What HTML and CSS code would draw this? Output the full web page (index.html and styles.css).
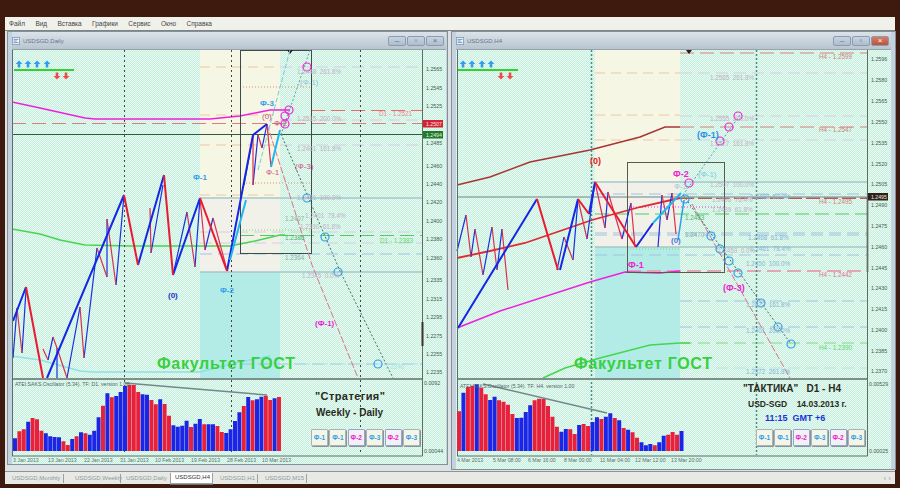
FILE: index.html
```html
<!DOCTYPE html>
<html lang="ru">
<head>
<meta charset="utf-8">
<title>USDSGD</title>
<link rel="stylesheet" href="styles.css">
</head>
<body>
<div class="app">
  <nav class="menu">
    <span>Файл</span><span>Вид</span><span>Вставка</span><span>Графики</span><span>Сервис</span><span>Окно</span><span>Справка</span>
  </nav>
  <main class="mdi">
    <section class="win win-left">
      <header class="titlebar">
        <svg class="ticon" viewBox="0 0 10 10"><rect x="0.5" y="0.5" width="9" height="9" fill="#eef3f8" stroke="#7f9ab8"/><path d="M2 3H8M2 5H6M2 7H8" stroke="#5c82aa"/></svg>
        <span class="ttext">USDSGD,Daily</span>
        <span class="ctls"><span class="ctl">–</span><span class="ctl">▫</span><span class="ctl">×</span></span>
      </header>
      <div class="panel">
        <svg class="chart" width="434" height="415" viewBox="12 50 434 415">
          <defs>
            <path id="up" d="M0-3.400 3.400 0H1.300V3.400H-1.300V0H-3.400Z" fill="#2f9df0"/>
            <path id="dn" d="M0 3.400 3.400 0H1.300V-3.400H-1.300V0H-3.400Z" fill="#ee4a4a"/>
          </defs>
          <!-- zones -->
          <rect x="200" y="50" width="80" height="148" class="z-cream"/>
          <rect x="200" y="198" width="80" height="74" class="z-gray"/>
          <rect x="200" y="272" width="80" height="106" class="z-cyan"/>
          <!-- fibonacci levels -->
          <path class="l-orange" d="M200 67H280M200 115H280M200 145H280M200 195H280"/>
          <path class="l-lav" d="M280 67H422M280 120H422M280 145H422M200 232H422M200 243H422"/>
          <path class="l-gray" d="M200 198H422M200 272H422"/>
          <path class="l-blue" d="M200 254H422M240 364H422"/>
          <path class="l-paleblue" d="M280 364H422"/>
          <path class="l-redfaint" d="M12 123.500H422"/>
          <path class="l-red" d="M311 110.500H422"/>
          <path class="l-green" d="M240 235.500H422"/>
          <path class="l-dots-red" d="M240 87H311M240 183H311"/>
          <path class="l-dots-green" d="M240 230H311"/>
          <path class="l-bid" d="M12 134.500H422"/>
          <!-- moving averages -->
          <path class="ma-magenta" d="M12 102 40 108 85 118 95 119H210L240 116 270 110H290"/>
          <path class="ma-green" d="M12 229 40 234 60 240 85 245 130 246H230L255 241 280 235H285"/>
          <path class="ma-cyan" d="M12 356 40 360 80 371 92 372H200L235 363 270 356"/>
          <!-- grid -->
          <path class="grid" d="M124.500 50V455M231.500 50V455M360.500 50V455"/>
          <rect x="240.500" y="50.500" width="71" height="203" class="box"/>
          <path class="tri" d="M287 50H293L290 54Z"/>
          <!-- wave lines -->
          <path class="w-pink" d="M267 124 312 265 358 378"/>
          <path class="w-dot" d="M281 134 340 271 393 378"/>
          <path class="w-cy" d="M258 170 290 50"/>
          <path class="w-dotb" d="M281 135 310 50"/>
          <!-- thin zigzag -->
          <path class="t-blue" d="M13 358 17 308M22 353 26 290M48 360 53 337M57 348V378M67 378 80 307M84 358 97 248M107 277V219M116 285 124 195M151 253 163 185M173 275 187 212M195 267 200 198M205 250 213 218M244 185 253 135M258 135 253 185M262 148 267 124"/>
          <path class="t-red" d="M17 308 22 353M43 349 48 360M57 348 67 378M53 337 57 348M80 307 84 358M97 248 107 277M107 219 116 285M124 195 127 210M150 208 151 253M187 212 195 267M200 198 205 250M213 218 227 270M253 135V185M258 135 262 148M267 124 271 167"/>
          <!-- thick zigzag -->
          <path class="b-blue" d="M13 321 26 287M47 378 124 195M138 265 164 175M173 275 200 198M227 271 253 135 267 124"/>
          <path class="b-red" d="M26 287 43 378M124 195 138 265M164 175 173 275M200 198 227 271"/>
          <path class="b-cyan" d="M230 260 246 200M271 167 280 130"/>
          <!-- circles -->
          <g class="c-mag"><circle cx="307" cy="67" r="4"/><circle cx="289" cy="110" r="4"/><circle cx="285" cy="116" r="4"/><circle cx="285" cy="124" r="4"/></g>
          <g class="c-blue"><circle cx="307" cy="198" r="4"/><circle cx="325" cy="237" r="4"/><circle cx="338" cy="272" r="4"/><circle cx="378" cy="364" r="4"/></g>
          <!-- arrows -->
          <use href="#up" x="19" y="64"/><use href="#up" x="28" y="64"/><use href="#up" x="37" y="64"/><use href="#up" x="47" y="64"/>
          <path class="sig" d="M14 70H74"/>
          <use href="#dn" x="57" y="76"/><use href="#dn" x="66" y="76"/>
          <!-- wave labels -->
          <text x="260" y="106" class="wl wl-blue">Ф-3</text>
          <text x="193" y="180" class="wl wl-blue">Ф-1</text>
          <text x="168" y="298" class="wl wl-navy">(0)</text>
          <text x="220" y="293" class="wl wl-blue">Ф-2</text>
          <text x="315" y="326" class="wl wl-mag">(Ф-1)</text>
          <text x="266" y="175" class="wl wl-rose">Ф-1</text>
          <text x="295" y="169" class="wl wl-rose">(Ф-3)</text>
          <text x="262" y="119" class="wl wl-rose">(0)</text>
          <text x="300" y="85" class="wl wl-pale">(Ф-1)</text>
          <text x="274" y="126" class="wl wl-rose">Ф-2</text>
          <!-- level labels -->
          <text x="297" y="74" class="fl">1.2448  261.8%</text>
          <text x="297" y="121" class="fl">1.2515  200.0%</text>
          <text x="297" y="151" class="fl">1.2461  161.8%</text>
          <text x="297" y="200" class="fl">1.2431  100.0%</text>
          <text x="305" y="218" class="fl">1.2401  78.4%</text>
          <text x="300" y="229" class="fl">1.2390  61.8%</text>
          <text x="285" y="221" class="fl fl-g">1.2407</text>
          <text x="285" y="240" class="fl fl-g2">1.2386</text>
          <text x="285" y="260" class="fl fl-g">1.2364</text>
          <text x="302" y="278" class="fl">1.2345  0.0%</text>
          <text x="379" y="116" class="fl fl-r">D1 - 1.2521</text>
          <text x="380" y="243" class="fl fl-gr">D1 - 1.2383</text>
          <text x="385" y="369" class="fl fl-c">1.2246</text>
          <!-- Watermark -->
          <text x="157" y="369" class="wm">Факультет ГОСТ</text>
          <!-- separator and axes -->
          <path class="sep" d="M12 379H423"/>
          <path class="axis" d="M422.500 50V456H12M12.500 50V456"/>
          <path class="axmark" d="M422.500 322V346"/>
          <g class="ax">
            <text x="426" y="71">1.2565</text><text x="426" y="90">1.2545</text><text x="426" y="108">1.2525</text><text x="426" y="145">1.2485</text><text x="426" y="168">1.2460</text><text x="426" y="186">1.2440</text><text x="426" y="204">1.2420</text><text x="426" y="223">1.2400</text><text x="426" y="241">1.2380</text><text x="426" y="260">1.2360</text><text x="426" y="282">1.2335</text><text x="426" y="301">1.2315</text><text x="426" y="319">1.2295</text><text x="426" y="338">1.2275</text><text x="426" y="356">1.2255</text><text x="426" y="374">1.2235</text><text x="424" y="385">0.0092</text><text x="424" y="453">0.00044</text>
          </g>
          <rect x="423" y="120" width="20" height="7.500" class="tag-red"/><text x="426" y="125.500" class="tagt">1.2507</text>
          <rect x="423" y="131" width="20" height="7.500" class="tag-green"/><text x="426" y="136.500" class="tagt">1.2494</text>
          <!-- oscillator bars -->
          <g transform="translate(15 0) scale(4.4 1)">
            <path class="bar-b" d="M0 451V438.300M3 451V421.700M7 451V433.300M8 451V436.300M9 451V437M10 451V437.300M13 451V439M15 451V432.300M17 451V434.700M18 451V430.700M19 451V417.300M21 451V393.300M23 451V396M24 451V392M25 451V386M29 451V394.300M30 451V394.700M33 451V399.300M36 451V425.300M37 451V426.700M38 451V425.700M39 451V420.700M41 451V423.700M42 451V419M44 451V424.300M45 451V424.300M48 451V433M49 451V429.300M50 451V421M51 451V412.300M53 451V397M55 451V399.300M56 451V396.700M59 451V398.300"/>
            <path class="bar-r" d="M1 451V431.300M2 451V429.300M4 451V418M5 451V419.300M6 451V430.700M11 451V441.300M12 451V445M14 451V436.300M16 451V433.300M20 451V405.700M22 451V397.300M26 451V384.700M27 451V385M28 451V392M31 451V400M32 451V404.300M34 451V404M35 451V415.700M40 451V427M43 451V424.300M46 451V426M47 451V432M52 451V406M54 451V400.300M57 451V395.700M58 451V400M60 451V397"/>
          </g>
          <path class="trend" d="M125 383 267 395"/>
          <text x="15" y="386" class="osc">ATEI.SAKS.Oscillator (5.34). TF: D1. version 1.00</text>
          <g class="dt">
            <text x="13" y="462">3 Jan 2013</text><text x="48" y="462">13 Jan 2013</text><text x="84" y="462">22 Jan 2013</text><text x="120" y="462">31 Jan 2013</text><text x="155" y="462">10 Feb 2013</text><text x="191" y="462">19 Feb 2013</text><text x="227" y="462">28 Feb 2013</text><text x="262" y="462">10 Mar 2013</text>
          </g>
          <text x="315" y="400" class="note note-l">"Стратегия"</text>
          <text x="316" y="416" class="note note-m">Weekly - Daily</text>
        </svg>
        <div class="phases phases-left">
          <span class="ph ph-b">Ф-1</span><span class="ph ph-b">Ф-1</span><span class="ph ph-m">Ф-2</span><span class="ph ph-b">Ф-3</span><span class="ph ph-m">Ф-2</span><span class="ph ph-b">Ф-3</span>
        </div>
      </div>
    </section>

    <section class="win win-right">
      <header class="titlebar">
        <svg class="ticon" viewBox="0 0 10 10"><rect x="0.5" y="0.5" width="9" height="9" fill="#eef3f8" stroke="#7f9ab8"/><path d="M2 3H8M2 5H6M2 7H8" stroke="#5c82aa"/></svg>
        <span class="ttext">USDSGD,H4</span>
        <span class="ctls"><span class="ctl">–</span><span class="ctl">▫</span><span class="ctl ctl-close">×</span></span>
      </header>
      <div class="panel">
        <svg class="chart" width="434" height="417" viewBox="456 50 434 417">
          <rect x="595" y="50" width="85" height="132" class="z-cream"/>
          <rect x="595" y="182" width="85" height="65" class="z-gray"/>
          <rect x="595" y="247" width="85" height="131" class="z-cyan"/>
          <path class="l-orange" d="M595 73H680M595 115H680M595 140H680"/>
          <path class="l-lav" d="M680 73H867M680 116H867M680 140H867"/>
          <path class="l-gray" d="M592 182H867M595 247H867"/>
          <path class="l-blue" d="M595 194H867M595 233H867M595 235H867M595 255H867M680 301H867M680 327H867"/>
          <path class="l-paleblue" d="M680 368H867"/>
          <path class="l-redfaint" d="M680 53H867M680 127H867"/>
          <path class="l-reddark" d="M680 198H867"/>
          <path class="l-green" d="M595 214H867"/>
          <path class="l-green-thin" d="M680 343H867"/>
          <path class="l-dots-mag" d="M627 207H725"/>
          <path class="l-dots-green" d="M627 249H680"/>
          <path class="l-pink" d="M627 271H867"/>
          <path class="l-bidgray" d="M457 197H867"/>
          <path class="ma-dred" d="M457 185 490 177 530 162 590 150 640 137 665 127H680"/>
          <path class="ma-red" d="M457 258 490 251 525 243 560 231 592 220 640 207 680 198"/>
          <path class="ma-magenta" d="M457 328 500 311 590 282 625 272 660 273 680 271"/>
          <path class="ma-green" d="M543 378 565 368 600 358 650 345 680 343H690"/>
          <path class="grid-t" d="M591.500 50V455M756.500 50V455"/>
          <rect x="627.500" y="162.500" width="97" height="110" class="box box-b"/>
          <path class="tri" d="M686 50H692L689 54Z"/>
          <path class="w-pink" d="M692 204 790 378"/>
          <path class="w-dot" d="M683 195 791 344"/>
          <path class="w-dotb" d="M683 195 740 115"/>
          <path class="t-blue" d="M457 251 466 215M471 257 475 229M483 275 492 227M497 270 502 229M557 270 564 237M573 260 578 199M587 239 595 182M605 228 608 192M622 239 631 203M658 247 662 195M667 220 672 193"/>
          <path class="t-red" d="M466 215 471 257M475 229 483 275M492 227 497 270M502 229 508 290M564 237 573 260M578 199 587 239M595 182 605 228M608 192 622 239M631 203 635 247M662 195 667 220M672 193 676 234"/>
          <path class="b-blue" d="M458 328 537 199M560 270 578 199M589 214 595 182M636 247 653 223"/>
          <path class="b-red" d="M537 199 558 270M578 199 589 214M595 182 636 247"/>
          <path class="b-cyan" d="M653 223 681 193"/>
          <path class="bb-blue" d="M678 240 684 200"/>
          <path class="grip" d="M867.500 197V272"/>
          <g class="c-mag"><circle cx="738" cy="116" r="4"/><circle cx="729" cy="127" r="4"/><circle cx="720" cy="141" r="4"/><circle cx="689" cy="183" r="4"/></g>
          <g class="c-blue"><circle cx="685" cy="199" r="4"/><circle cx="711" cy="236" r="4"/><circle cx="720" cy="249" r="4"/><circle cx="729" cy="261" r="4"/><circle cx="738" cy="273" r="4"/><circle cx="761" cy="303" r="4"/><circle cx="778" cy="327" r="4"/><circle cx="791" cy="344" r="4"/></g>
          <use href="#up" x="463" y="64"/><use href="#up" x="472" y="64"/><use href="#up" x="482" y="64"/><use href="#up" x="491" y="64"/>
          <path class="sig" d="M458 70H518"/>
          <use href="#dn" x="501" y="76"/><use href="#dn" x="510" y="76"/>
          <text x="590" y="164" class="wl wl-redb">(0)</text>
          <text x="628" y="268" class="wl wl-magb">Ф-1</text>
          <text x="671" y="243" class="wl wl-navy2">(0)</text>
          <text x="673" y="177" class="wl wl-magb">Ф-2</text>
          <text x="674" y="189" class="wl wl-pale">Ф-3</text>
          <text x="698" y="177" class="wl wl-cy">(Ф-1)</text>
          <text x="697" y="138" class="wl wl-blueb">(Ф-1)</text>
          <text x="723" y="291" class="wl wl-magb">(Ф-3)</text>
          <text x="710" y="80" class="fl">1.2585  261.8%</text>
          <text x="710" y="121" class="fl">1.2555  200.0%</text>
          <text x="710" y="146" class="fl">1.2527  161.8%</text>
          <text x="710" y="187" class="fl">1.2507  100.0%</text>
          <text x="750" y="199" class="fl fl-bl">1.2488  50.0%</text>
          <text x="712" y="202" class="fl">1.2496  76.4%</text>
          <text x="712" y="212" class="fl">1.2489  61.8%</text>
          <text x="685" y="220" class="fl fl-g2">1.2483</text>
          <text x="685" y="237" class="fl fl-g">1.2470</text>
          <text x="748" y="240" class="fl fl-bl">1.2468  61.8%</text>
          <text x="750" y="251" class="fl fl-bl">1.2461  78.4%</text>
          <text x="718" y="253" class="fl">1.2459  0.0%</text>
          <text x="746" y="266" class="fl fl-bl">1.2450  100.0%</text>
          <text x="746" y="307" class="fl fl-bl">1.2422  161.8%</text>
          <text x="746" y="333" class="fl fl-bl">1.2401  200.0%</text>
          <text x="746" y="374" class="fl fl-bl">1.2372  261.8%</text>
          <text x="819" y="59" class="fl fl-rd">H4 - 1.2599</text>
          <text x="819" y="132" class="fl fl-rd">H4 - 1.2547</text>
          <text x="819" y="204" class="fl fl-rd">H4 - 1.2495</text>
          <text x="819" y="277" class="fl fl-pk">H4 - 1.2442</text>
          <text x="819" y="350" class="fl fl-gr">H4 - 1.2390</text>
          <text x="574" y="369" class="wm">Факультет ГОСТ</text>
          <path class="sep" d="M457 379H868"/>
          <path class="axis" d="M867.500 50V456H457M457.500 50V456"/>
          <g class="ax">
            <text x="871" y="61">1.2596</text><text x="871" y="82">1.2580</text><text x="871" y="103">1.2565</text><text x="871" y="124">1.2550</text><text x="871" y="145">1.2535</text><text x="871" y="166">1.2520</text><text x="871" y="186">1.2505</text><text x="871" y="207">1.2490</text><text x="871" y="228">1.2475</text><text x="871" y="249">1.2460</text><text x="871" y="270">1.2445</text><text x="871" y="290">1.2430</text><text x="871" y="311">1.2415</text><text x="871" y="332">1.2400</text><text x="871" y="353">1.2385</text><text x="871" y="373">1.2370</text><text x="869" y="386">0.00529</text><text x="869" y="453">0.00025</text>
          </g>
          <rect x="868" y="193" width="20" height="7.500" class="tag-dark"/><text x="871" y="198.500" class="tagt">1.2495</text>
          <g transform="translate(459 0) scale(4.45 1)">
            <path class="bar-b" d="M1 451V392.700M4 451V384.300M7 451V400M8 451V396.700M13 451V418M14 451V417.700M15 451V412M16 451V405.300M23 451V431.700M24 451V429M27 451V425M30 451V422M31 451V417.300M33 451V416.700M34 451V413.300M36 451V420.300M38 451V429.700M41 451V442.300M42 451V445.300M43 451V444M45 451V442.300M46 451V435.700M50 451V431"/>
            <path class="bar-r" d="M0 451V411.300M2 451V387M3 451V385.700M5 451V387.700M6 451V394.300M9 451V400.300M10 451V401.700M11 451V404.700M12 451V414M17 451V400.300M18 451V398.700M19 451V398.700M20 451V406M21 451V416.700M22 451V426.700M25 451V429.300M26 451V434M28 451V424M29 451V426M32 451V419M35 451V418M37 451V428M39 451V432.300M40 451V437.700M44 451V445.300M47 451V434.700M48 451V432M49 451V434.700"/>
          </g>
          <path class="trend" d="M483 384 607 413"/>
          <text x="460" y="388" class="osc">ATEI.SAKS.Oscillator (5.34). TF: H4. version 1.00</text>
          <g class="dt">
            <text x="457" y="462">4 Mar 2013</text><text x="493" y="462">5 Mar 08:00</text><text x="528" y="462">6 Mar 16:00</text><text x="564" y="462">8 Mar 00:00</text><text x="600" y="462">11 Mar 04:00</text><text x="635" y="462">12 Mar 12:00</text><text x="671" y="462">13 Mar 20:00</text>
          </g>
          <text x="743" y="392" class="note note-t">"ТАКТИКА"   D1 - H4</text>
          <text x="748" y="407" class="note note-s">USD-SGD    14.03.2013 г.</text>
          <text x="765" y="421" class="note note-time">11:15  GMT +6</text>
        </svg>
        <div class="phases phases-right">
          <span class="ph ph-b">Ф-1</span><span class="ph ph-b">Ф-1</span><span class="ph ph-m">Ф-2</span><span class="ph ph-b">Ф-3</span><span class="ph ph-m">Ф-2</span><span class="ph ph-b">Ф-3</span>
        </div>
      </div>
    </section>
  </main>
  <footer class="tabs">
    <span class="tab t-mon">USDSGD,Monthly</span>
    <span class="tab t-week">USDSGD,Weekly</span>
    <span class="tab t-day">USDSGD,Daily</span>
    <span class="tab tab-on">USDSGD,H4</span>
    <span class="tab t-h1">USDSGD,H1</span>
    <span class="tab t-m15">USDSGD,M15</span>
    <span class="tab-arrows">‹ ›</span>
  </footer>
</div>
</body>
</html>
```
FILE: styles.css
```css
* { box-sizing: border-box; }
html, body { margin: 0; padding: 0; }
body {
  width: 900px;
  height: 488px;
  overflow: hidden;
  background: #3e1a0e;
  font-family: "Liberation Sans", Arial, sans-serif;
}
.app {
  margin: 17px 5px 0 5px;
  height: 467px;
  display: flex;
  flex-direction: column;
  background: #dfe3e4;
}
.menu {
  height: 13px;
  flex: none;
  display: flex;
  align-items: center;
  padding-left: 4px;
  gap: 10.400px;
  background: #f1f1ec;
  font-size: 6.500px;
  color: #444;
}
.mdi {
  flex: 1;
  min-height: 0;
  display: flex;
  align-items: flex-start;
  gap: 3px;
  padding: 0 0 0 2px;
  background: #dde2e4;
  border-top: 1px solid #7d8487;
  border-bottom: 1px solid #8c9496;
}
.win {
  flex: none;
  background: #c3d2de;
  border: 1px solid #858f96;
  display: flex;
  flex-direction: column;
}
.win-left { width: 441px; height: 434px; padding: 0 1px 0 4px; }
.win-right { width: 445px; height: 439px; padding: 0 4px 0 4px; }
.titlebar {
  flex: none;
  height: 18px;
  display: flex;
  align-items: center;
  gap: 3px;
  padding: 0 2px 0 0;
  background: linear-gradient(#dbe3ea, #b8c4cf);
  border-bottom: 1px solid #98a2aa;
}
.ticon { width: 8px; height: 8px; flex: none; }
.ttext { font-size: 6px; color: #66758a; }
.ctls { margin-left: auto; display: flex; gap: 1px; }
.ctl {
  width: 18px;
  height: 10px;
  display: flex;
  align-items: center;
  justify-content: center;
  font-size: 8px;
  line-height: 1;
  color: #5d6c80;
  background: linear-gradient(#c6d4e2, #aebccc);
  border: 1px solid #8c9cb0;
  border-radius: 2px;
}
.ctl-close { background: linear-gradient(#d87f60, #b9533f); color: #fff; }
.panel {
  position: relative;
  flex: 1;
  min-height: 0;
  overflow: hidden;
  background: repeating-conic-gradient(#c3efdc 0 25%, #e9fbf2 0 50%) 0 0 / 2px 2px;
}
.chart { display: block; }

/* zones */
.z-cream { fill: #f6f6e4; }
.z-gray { fill: #f1f1e9; }
.z-cyan { fill: #b3ebe6; }
.tri { fill: #2a1a14; }

/* levels */
.l-orange, .l-lav, .l-gray, .l-blue, .l-paleblue, .l-redfaint, .l-red, .l-reddark, .l-green, .l-green-thin,
.l-dots-red, .l-dots-green, .l-dots-mag, .l-pink, .l-bid, .l-bidgray { fill: none; stroke-width: 1; }
.l-orange { stroke: #eec7a6; stroke-dasharray: 10 6; }
.l-lav { stroke: #d6cde2; stroke-dasharray: 12 6; }
.l-gray { stroke: #a7c6cb; stroke-width: 1.500; }
.l-blue { stroke: #9fc3e0; stroke-dasharray: 12 6; }
.l-paleblue { stroke: #b3e6e8; stroke-dasharray: 12 6; }
.l-redfaint { stroke: #d8807f; stroke-dasharray: 14 6; }
.l-red { stroke: #ea6a6a; stroke-dasharray: 14 6; }
.l-reddark { stroke: #b82525; stroke-width: 1.500; stroke-dasharray: 14 4; }
.l-green { stroke: #52cb62; stroke-dasharray: 14 6; }
.l-green-thin { stroke: #7cdd7f; stroke-dasharray: 12 6; }
.l-dots-red { stroke: #e58a70; stroke-dasharray: 1 2; }
.l-dots-green { stroke: #7edb6a; stroke-dasharray: 1 2; }
.l-dots-mag { stroke: #f03cd0; stroke-dasharray: 1 2; }
.l-pink { stroke: #e2a6b6; stroke-width: 2; stroke-dasharray: 14 6; }
.l-bid { stroke: #2a5f3a; }
.l-bidgray { stroke: #94a8aa; stroke-width: 1.500; }

/* moving averages */
.ma-magenta, .ma-green, .ma-cyan, .ma-dred, .ma-red { fill: none; }
.ma-magenta { stroke: #f01fe0; stroke-width: 1.500; }
.ma-green { stroke: #45d64e; stroke-width: 1.500; }
.ma-cyan { stroke: #8ee0ea; stroke-width: 1.500; }
.ma-dred { stroke: #a83434; stroke-width: 1.500; }
.ma-red { stroke: #e02a30; stroke-width: 1.800; }

.grid { stroke: #3a4a48; stroke-dasharray: 2 3; fill: none; }
.grid-t { stroke: #4d8a85; stroke-width: 1.500; stroke-dasharray: 2 2; fill: none; }
.box { fill: none; stroke: #3f4b48; }
.box-b { stroke: #5c5a48; }

/* wave lines */
.w-pink, .w-dot, .w-cy, .w-dotb { fill: none; }
.w-pink { stroke: #dc6f90; stroke-dasharray: 7 2; }
.w-dot { stroke: #44706a; stroke-dasharray: 2 2; }
.w-cy { stroke: #73cbe0; stroke-dasharray: 5 2; }
.w-dotb { stroke: #5fa0a8; stroke-dasharray: 2 2; }
.t-blue, .t-red, .b-blue, .b-red, .b-cyan, .bb-blue { fill: none; stroke-linejoin: round; }
.t-blue { stroke: #1b2fe0; stroke-width: 1.200; }
.t-red { stroke: #d93050; stroke-width: 1.200; }
.b-blue { stroke: #1426e6; stroke-width: 2; }
.b-red { stroke: #ea1a35; stroke-width: 2; }
.b-cyan { stroke: #1cb8f0; stroke-width: 2; }
.bb-blue { stroke: #2a9df0; stroke-width: 1.500; }
.grip { stroke: #3a2a2a; stroke-width: 1.500; fill: none; }

.c-mag circle { fill: none; stroke: #f020d8; stroke-width: 1.200; }
.c-blue circle { fill: none; stroke: #2f9cf0; stroke-width: 1.200; }
.sig { stroke: #2fd52f; stroke-width: 2; fill: none; }

/* labels */
.wl { font: bold 8px "Liberation Sans", Arial, sans-serif; }
.wl-blue { fill: #2e9ff0; }
.wl-navy { fill: #2030d0; }
.wl-navy2 { fill: #4a78e0; }
.wl-mag { fill: #f018d8; }
.wl-magb { fill: #f020d0; font-size: 9px; }
.wl-rose { fill: #cc5088; font-weight: normal; font-size: 8px; }
.wl-pale { fill: #9cc4d4; font-weight: normal; }
.wl-redb { fill: #e02020; font-size: 9px; }
.wl-cy { fill: #7cc8e4; font-weight: normal; }
.wl-blueb { fill: #2890e8; font-size: 9px; }
.fl { font: 6.300px "Liberation Sans", Arial, sans-serif; fill: #bfb2c6; white-space: pre; }
.fl-g { fill: #93aca8; }
.fl-g2 { fill: #4fb46e; }
.fl-r { fill: #e88a90; }
.fl-rd { fill: #d08080; }
.fl-pk { fill: #e870a0; }
.fl-gr { fill: #60d870; }
.fl-c { fill: #a6e6ea; }
.fl-bl { fill: #8ab4d8; }
.wm { font: bold 16px "Liberation Sans", Arial, sans-serif; letter-spacing: 0.700px; fill: #38cf42; }

.sep { stroke: #7f8f8c; stroke-width: 2; fill: none; }
.axis { stroke: #5d6d6a; fill: none; }
.axmark { stroke: #3a2e2e; stroke-width: 2; fill: none; }
.ax text { font: 5.300px "Liberation Sans", Arial, sans-serif; fill: #4a5856; }
.dt text { font: 5.200px "Liberation Sans", Arial, sans-serif; fill: #5f6f6d; }
.osc { font: 5.200px "Liberation Sans", Arial, sans-serif; fill: #56646a; }
.tag-red { fill: #d62232; }
.tag-green { fill: #1f7a2c; }
.tag-dark { fill: #2e2018; }
.tagt { font: 5.200px "Liberation Sans", Arial, sans-serif; fill: #f2e8e0; }
.bar-b { stroke: #1c24e6; stroke-width: 0.900; fill: none; }
.bar-r { stroke: #e8203c; stroke-width: 0.900; fill: none; }
.trend { stroke: #74878a; stroke-width: 1.500; fill: none; }

.note { font-family: "Liberation Sans", Arial, sans-serif; font-weight: bold; fill: #2a2a22; white-space: pre; }
.note-l { font-size: 11px; letter-spacing: 0.400px; }
.note-m { font-size: 10px; }
.note-t { font-size: 10px; }
.note-s { font-size: 8.500px; }
.note-time { font-size: 9px; fill: #1c30e0; }

/* phase buttons */
.phases {
  position: absolute;
  top: 379px;
  display: flex;
  gap: 1.400px;
}
.phases-left { left: 299px; }
.phases-right { left: 300px; }
.ph {
  width: 17px;
  height: 17px;
  display: flex;
  align-items: center;
  justify-content: center;
  font-size: 6.500px;
  font-weight: bold;
  background: #f5f5e6;
  border: 1px solid #a8b4bc;
  border-radius: 1px;
  box-shadow: 1px 1px 0 #8a9498;
}
.ph-b { color: #2e9ff0; }
.ph-m { color: #f020d0; background: #f1f1f6; border-color: #98a4c8; }

/* tabs */
.tabs {
  flex: none;
  height: 12px;
  display: flex;
  align-items: center;
  background: #e8e9e4;
  font-size: 6px;
  color: #8a9a9c;
  padding-left: 7px;
}
.tab { flex: none; white-space: nowrap; border-right: 1px solid #98a2a4; line-height: 9px; }
.t-mon { width: 52px; }
.t-week { width: 57px; padding-left: 11px; }
.t-day { width: 49px; padding-left: 5px; border-right: 0; }
.tab-on {
  width: 43px;
  height: 11px;
  padding-left: 4px;
  color: #333;
  background: #fff;
  border: 1px solid #9aa2a4;
  border-top: 0;
  box-shadow: 0 1px 0 #6a7072;
}
.t-h1 { width: 45px; padding-left: 7px; }
.t-m15 { width: 49px; padding-left: 7px; }
.tab-arrows { margin-left: auto; padding-right: 4px; color: #a0a8a8; font-size: 8px; }
```
